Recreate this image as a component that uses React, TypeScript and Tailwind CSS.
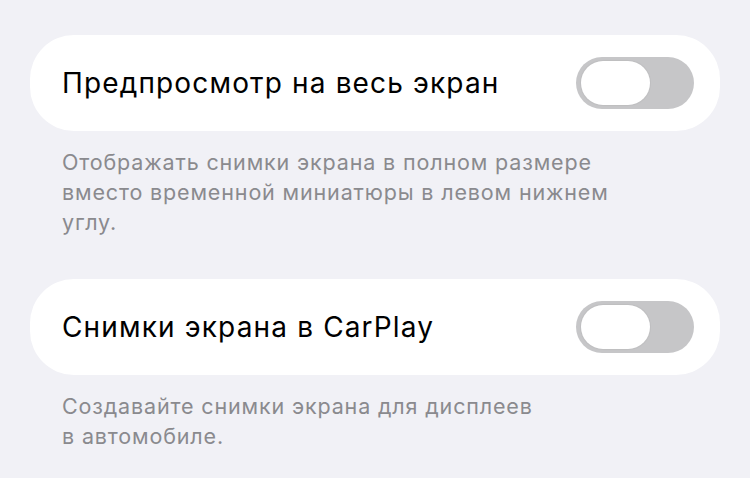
import React from "react";

function Toggle() {
  return (
    <div className="relative h-[52px] w-[118px] shrink-0 rounded-full bg-[#c6c6c8]">
      <div className="absolute left-[5px] top-[4px] h-[44px] w-[69px] rounded-full bg-white shadow-[0_0_1px_1px_rgba(0,0,0,0.04)]" />
    </div>
  );
}

function Section({ title, desc }: { title: string; desc: React.ReactNode }) {
  return (
    <div>
      <div className="flex h-[96px] items-center justify-between rounded-[44px] bg-white pl-[32px] pr-[26px]">
        <span className="text-[28px] leading-none text-black tracking-[1.15px]">{title}</span>
        <Toggle />
      </div>
      <div className="px-[32px] pt-[16px] text-[21.5px] leading-[30px] tracking-[0.85px] text-[#8a8a8e]">{desc}</div>
    </div>
  );
}

export default function App() {
  return (
    <div
      className="h-[478px] w-[750px] overflow-hidden bg-[#f1f1f6] px-[30px] pt-[35px]"
      style={{ fontFamily: "Inter, 'Noto Sans', sans-serif" }}
    >
      <Section
        title="Предпросмотр на весь экран"
        desc={
          <>
            Отображать снимки экрана в полном размере
            <br />
            вместо временной миниатюры в левом нижнем
            <br />
            углу.
          </>
        }
      />
      <div className="h-[42px]" />
      <Section
        title="Снимки экрана в CarPlay"
        desc={
          <>
            Создавайте снимки экрана для дисплеев
            <br />в автомобиле.
          </>
        }
      />
    </div>
  );
}
